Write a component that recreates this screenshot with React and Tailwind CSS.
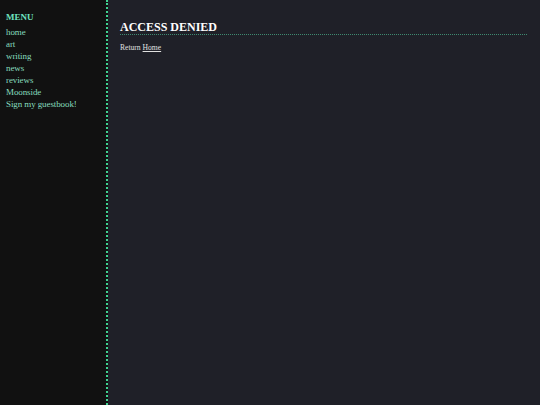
export default function App() {
  const links = ['home', 'art', 'writing', 'news', 'reviews', 'Moonside', 'Sign my guestbook!'];
  return (
    <div className="flex h-[405px] w-[540px] font-['Liberation_Serif',serif] bg-[#1f2028]">
      <aside className="w-[108px] shrink-0 bg-[#111111] border-r-2 border-dotted border-[#3fd391] pl-[6px] pt-[11px]">
        <div className="text-[9px] font-bold text-[#6fe3c0] leading-[12px] mb-[3px]">MENU</div>
        <ul className="text-[9px] tracking-[-0.1px] leading-[12px] text-[#86dcbf]">
          {links.map(l => (
            <li key={l}><a href="#">{l}</a></li>
          ))}
        </ul>
      </aside>
      <main className="flex-1 pl-[12px] pr-[13px] pt-[21px]">
        <h1 className="text-[12px] font-bold text-white leading-[13px] border-b border-dotted border-[#3e8a70]">ACCESS DENIED</h1>
        <p className="mt-[8px] text-[7.6px] text-[#e0e0e0] leading-[10px]">Return <a href="#" className="underline">Home</a></p>
      </main>
    </div>
  );
}
